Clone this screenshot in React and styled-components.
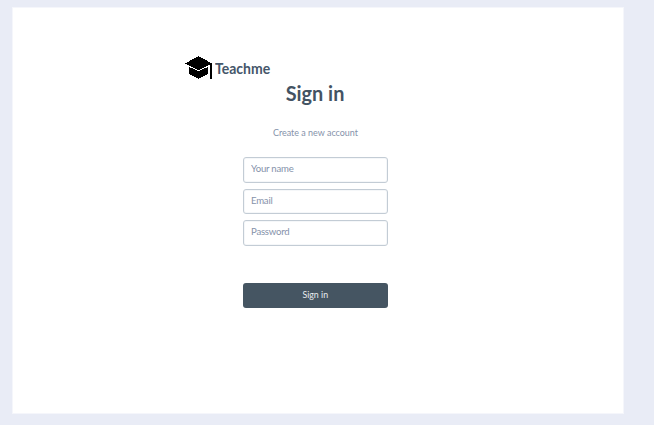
import React from 'react';
import styled, { createGlobalStyle } from 'styled-components';

const GlobalStyle = createGlobalStyle`
  * { box-sizing: border-box; }
  body { margin: 0; background: #e9ecf6; font-family: Lato, sans-serif; }
`;

const Page = styled.main`
  height: 425px;
  padding: 7px 30px 11px 12px;
  overflow: hidden;
`;

const Panel = styled.section`
  height: 407px;
  background: #fff;
  border: 1px solid #f5f6fb;
  padding: 47px 0 0 172px;
`;

const Brand = styled.header`
  display: flex;
  align-items: center;
  gap: 3px;
  height: 25px;
`;

const CapIcon = styled.svg`
  width: 27px;
  height: 24px;
  display: block;
  shape-rendering: crispEdges;
`;

const BrandName = styled.span`
  color: #45566a;
  font-size: 15px;
  line-height: 25px;
  font-weight: 700;
  padding-top: 2px;
  transform: scaleX(0.935);
  transform-origin: left;
`;

const Form = styled.form`
  display: flex;
  flex-direction: column;
  align-items: center;
  width: 145px;
  margin-left: 58px;
`;

const Title = styled.h1`
  margin: -1px 0 0;
  color: #435363;
  font-size: 21px;
  line-height: 28px;
  font-weight: 700;
  transform: scaleX(0.945);
`;

const Subtitle = styled.p`
  margin: 18px 0;
  color: #8592aa;
  font-size: 9.8px;
  line-height: 14px;
  white-space: nowrap;
  transform: scaleX(0.915);
`;

const Fields = styled.div`
  display: grid;
  gap: 6px;
  width: 100%;
`;

const Field = styled.input`
  width: 100%;
  height: 25.6px;
  padding: 0 7px 2px;
  border: 1px solid #c3ccd5;
  border-radius: 3px;
  background: #fff;
  box-shadow: inset 0 0 0 1px #f5f7f9;
  font: 9.6px Lato, sans-serif;
  letter-spacing: -0.22px;
  outline: none;
  &::placeholder { color: #8592aa; opacity: 1; }
`;

const Submit = styled.button`
  width: 100%;
  height: 25px;
  margin-top: 37px;
  padding: 0 0 2px;
  border: 0;
  border-radius: 3px;
  background: #455562;
  color: #e8ecef;
  font: 9.8px Lato, sans-serif;
`;

const SubmitLabel = styled.span`
  display: inline-block;
  transform: scaleX(0.9);
`;

export default function App() {
  return (
    <>
      <GlobalStyle />
      <Page>
        <Panel>
          <Brand>
            <CapIcon viewBox="0 0 27 24">
              <path d="M13.5 0 27 7.5 13.5 14.2 0 7.5Z" />
              <path d="M4 10.8v7.4l9.5 4.8 9.5-4.8v-7.4l-9.5 4.5Z" />
              <path d="M25 7.5h2V23h-2Z" />
            </CapIcon>
            <BrandName>Teachme</BrandName>
          </Brand>
          <Form>
            <Title>Sign in</Title>
            <Subtitle>Create a new account</Subtitle>
            <Fields>
              <Field placeholder="Your name" />
              <Field placeholder="Email" />
              <Field type="password" placeholder="Password" />
            </Fields>
            <Submit type="button"><SubmitLabel>Sign in</SubmitLabel></Submit>
          </Form>
        </Panel>
      </Page>
    </>
  );
}
